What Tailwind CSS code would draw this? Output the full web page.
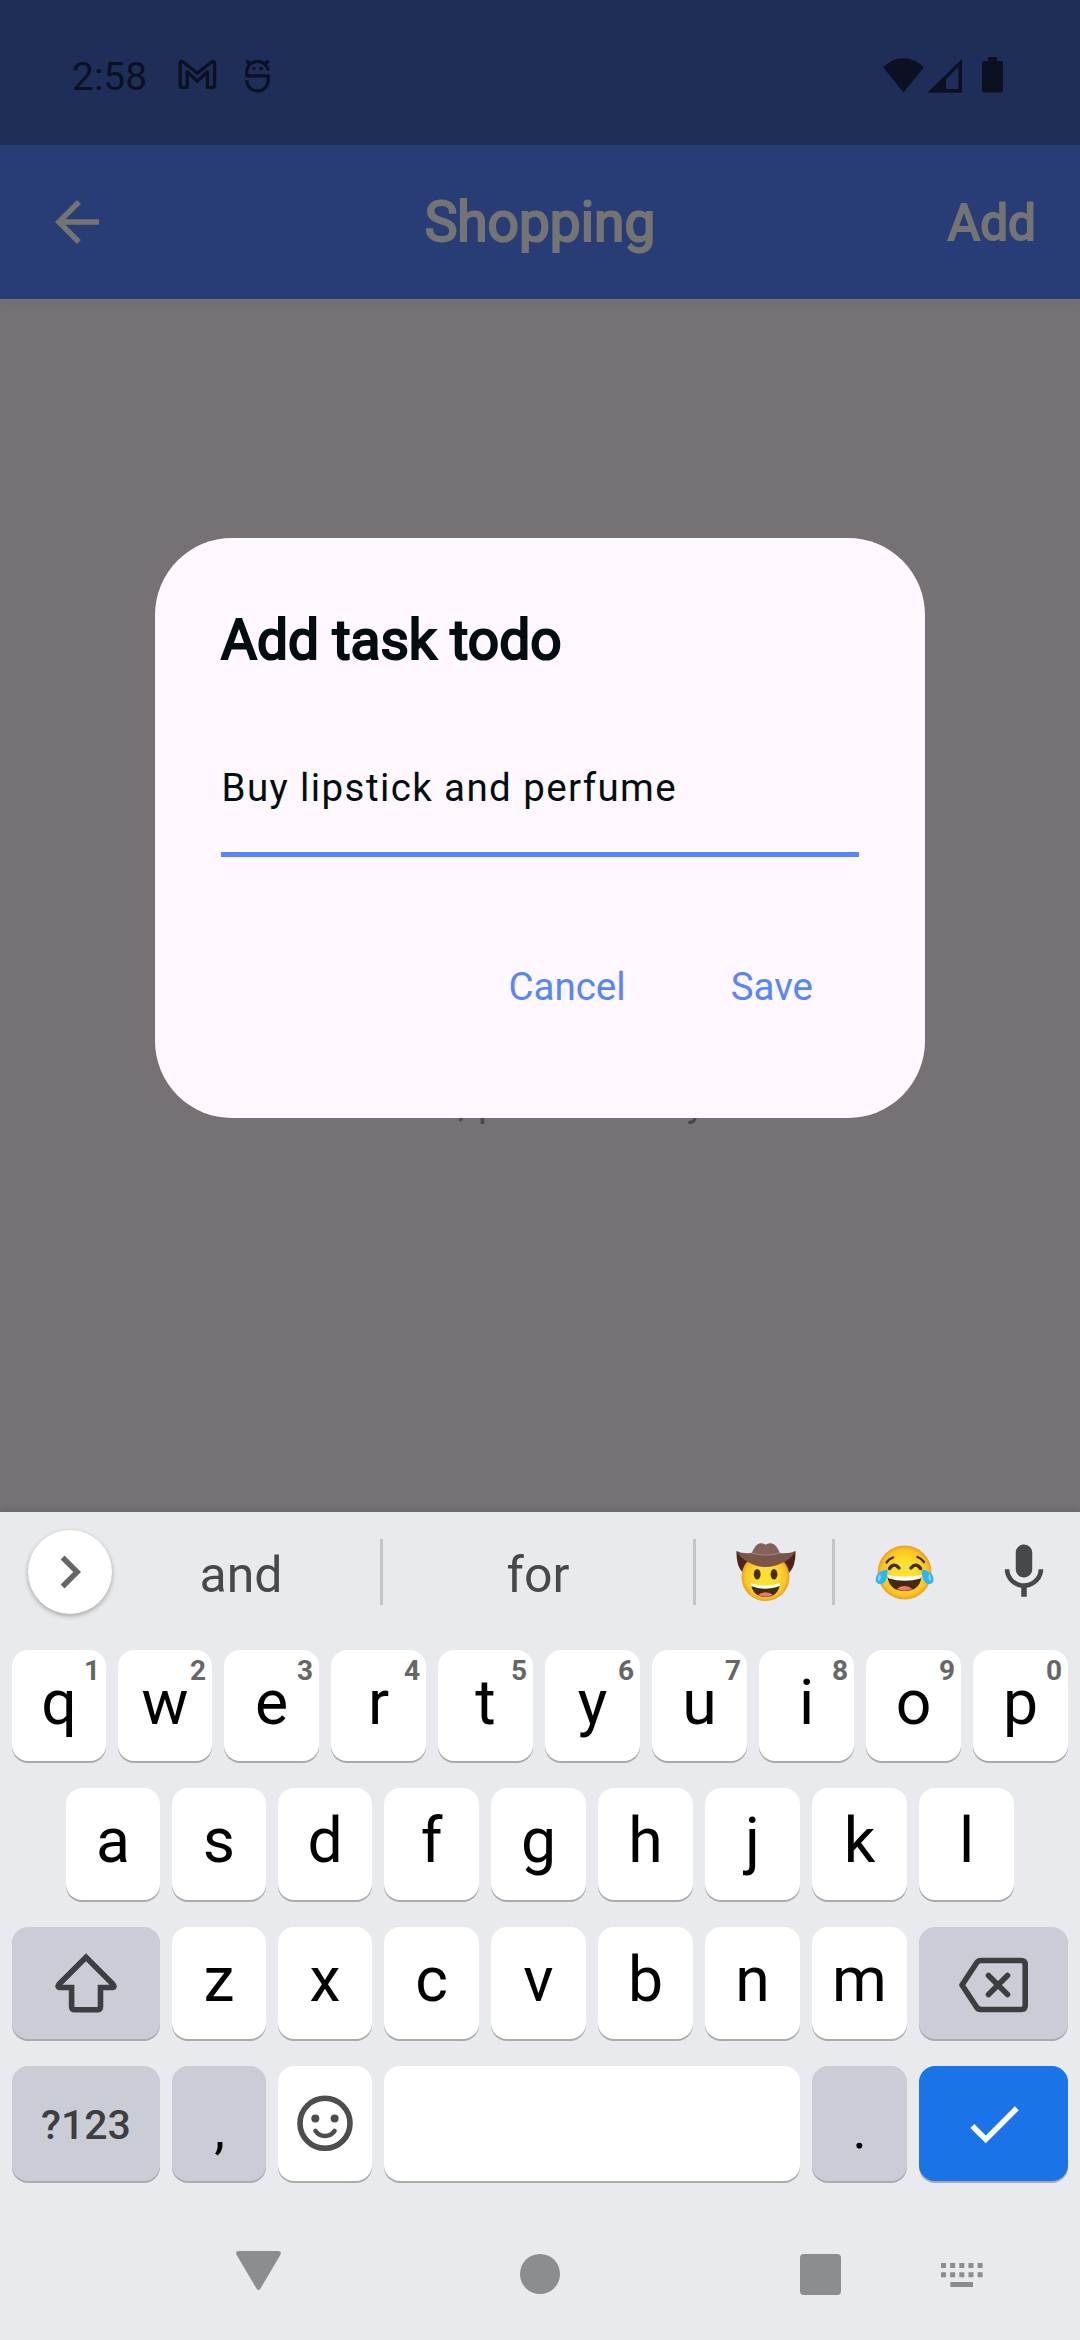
<!DOCTYPE html>
<html lang="en">
<head>
<meta charset="utf-8">
<title>Shopping</title>
<script src="https://cdn.jsdelivr.net/npm/@tailwindcss/browser@4"></script>
</head>
<body class="font-['Roboto',sans-serif]">
<div class="relative flex h-[2340px] w-[1080px] flex-col overflow-hidden bg-[#767175]">

  <!-- Status bar -->
  <header class="flex h-[145px] items-center justify-between bg-[#1f2e59] pt-[5px] pr-[76px] pl-[72px] text-[#0c1122]">
    <div class="flex items-center">
      <span class="w-[105px] pt-[4px] text-[39px] leading-none">2:58</span>
      <svg class="h-[36px] w-[40px]" viewBox="176 57 40 36" fill="none" stroke="currentColor" stroke-width="3.300" stroke-linejoin="round"><path d="M179.100 64.500Q179.100 59.500 183.100 62.700L196.300 73.200L209.600 62.700Q213.600 59.500 213.600 64.500V85.500Q213.600 87.300 211.700 87.300H206.400V71.800L196.300 81.300L186.200 71.800V87.300H181Q179.100 87.300 179.100 85.500Z"/></svg>
      <svg class="ml-[27px] h-[36px] w-[28px]" viewBox="244 57 28 36" fill="none" stroke="currentColor" stroke-width="3.300"><path d="M268.200 70.500A10.800 10.500 0 0 0 246.800 70.500V75.800H268.200V80A10.700 11 0 0 1 246.800 80"/><path d="M246.500 60.500l3.500 3.500M268.500 60.500l-3.500 3.500"/><circle cx="254" cy="68.500" r="1.700" fill="currentColor" stroke="none"/><circle cx="261" cy="68.500" r="1.700" fill="currentColor" stroke="none"/></svg>
    </div>
    <div class="flex items-center">
      <svg class="h-[36px] w-[122px]" viewBox="882 57 122 36" fill="currentColor"><path d="M903.5 92.5L883 67.3Q892 58.2 903.5 58.2T924 67.3Z"/><path fill-rule="evenodd" d="M927.4 92.7L962 58.7V92.7ZM946 79V89H958.4V67Z"/><path d="M988 57H997V61H1001Q1003 61 1003 63V90.5Q1003 92.5 1001 92.5H984Q982 92.5 982 90.5V63Q982 61 984 61H988Z"/></svg>
    </div>
  </header>

  <!-- App bar -->
  <nav class="grid h-[154px] grid-cols-3 items-center bg-[#283c75] pr-[44px] pl-[44px] text-[#747474] shadow-[0_2px_8px_rgba(0,0,0,0.06)]">
    <svg class="h-[66px] w-[66px]" viewBox="0 0 24 24" fill="currentColor"><path d="M20 11H7.83l5.59-5.59L12 4l-8 8 8 8 1.410-1.410L7.830 13H20z"/></svg>
    <h1 class="text-center text-[55px] leading-none [-webkit-text-stroke:2.200px]">Shopping</h1>
    <span class="pt-[3px] text-right text-[49.5px] leading-none [-webkit-text-stroke:2px]">Add</span>
  </nav>

  <!-- Page text behind the dialog -->
  <main class="flex-1 pt-[781px]">
    <p class="flex justify-between pr-[375px] pl-[458px] text-[38.5px] leading-[45px] text-[#4a474a]"><span class="tracking-[1.4px]">, p</span><span>y</span></p>
  </main>

  <!-- Dialog -->
  <section class="absolute top-[538.3px] left-[155px] flex h-[580px] w-[770px] flex-col rounded-[77px] bg-[#fef7ff] px-[66px] pt-[70px] text-[#020e11]">
    <h2 class="text-[55px] leading-[64px] [-webkit-text-stroke:2.200px]">Add task todo</h2>
    <div class="mt-[62px] flex h-[123px] items-center border-b-[5.5px] border-[#5686ff] pb-[10px] pl-[0.5px] text-[38.5px] leading-none tracking-[1.400px]">Buy lipstick and perfume</div>
    <div class="mt-[105px] flex justify-end gap-[105px] pr-[46px] text-[38.5px] leading-[50px] text-[#5686ff]"><span>Cancel</span><span>Save</span></div>
  </section>

  <!-- Keyboard -->
  <section class="flex h-[828px] flex-col bg-[#e8eaed] text-black shadow-[0_-2px_6px_rgba(0,0,0,0.1)]">
    <!-- Suggestions -->
    <div class="flex h-[120px] items-center text-[50px] leading-none text-[#47484a]">
      <div class="ml-[28px] flex size-[84px] items-center justify-center rounded-full bg-white shadow-[0_2px_5px_rgba(0,0,0,0.3)]">
        <svg class="size-[66px]" viewBox="0 0 24 24" fill="#666666"><path d="M10 6L8.59 7.41 13.17 12l-4.58 4.59L10 18l6-6z"/></svg>
      </div>
      <span class="w-[268px] pt-[5px] pr-[10px] text-center">and</span>
      <i class="h-[66px] w-[3px] bg-[#c4c5c9]"></i>
      <span class="w-[310px] pt-[5px] text-center">for</span>
      <i class="h-[66px] w-[3px] bg-[#c4c5c9]"></i>
      <div class="flex w-[136px] justify-center pl-[3px]">
        <svg class="size-[60px]" viewBox="0 0 60 60">
          <defs><radialGradient id="face"><stop offset="0.4" stop-color="#fde030"/><stop offset="0.85" stop-color="#f9c426"/><stop offset="1" stop-color="#ee9d1c"/></radialGradient></defs>
          <path fill="#4e2419" d="M.5 9Q0 24 7 31L14 20ZM59.500 9Q60 24 53 31L46 20Z"/>
          <circle cx="29.500" cy="35" r="24" fill="url(#face)"/>
          <path fill="#7a554a" d="M.5 9Q7 12 15 11H44Q53 12 59.500 9Q56 16 48 20Q39 25 29.500 25T12 20Q4 16 .5 9Z"/>
          <path fill="#84625a" d="M15.500 12Q19 2 24 1.300Q27.500 .8 29.500 2.800Q32 .8 35 1.300Q41 2 44 12Q30 16 15.500 12Z"/>
          <path fill="none" stroke="#9c8079" stroke-width="1" d="M15.500 11Q30 15 44 11"/>
          <ellipse cx="21.200" cy="32.300" rx="3.400" ry="5.300" fill="#4a2d0d"/><ellipse cx="38" cy="32.300" rx="3.400" ry="5.300" fill="#4a2d0d"/>
          <path fill="#422b0d" d="M15 42Q29.500 47 44 42Q42 55 29.500 55T15 42Z"/>
          <path fill="#fff" d="M15 41Q29.500 46.500 44 41V44Q29.500 49.500 15 44Z"/>
          <path fill="#ed7770" d="M22 53Q25 50.300 29.500 50.300T37 53Q29.500 56.500 22 53Z"/>
        </svg>
      </div>
      <i class="h-[66px] w-[3px] bg-[#c4c5c9]"></i>
      <div class="flex w-[139px] justify-center">
        <svg class="size-[60px]" viewBox="0 0 60 60">
          <circle cx="29.600" cy="30.500" r="27" fill="url(#face)"/>
          <path fill="none" stroke="#422b0d" stroke-width="2.300" stroke-linecap="round" d="M11.500 20.500Q14 17 18 15.500M42.500 15Q46.500 16.500 49 20"/>
          <path fill="none" stroke="#422b0d" stroke-width="3.400" stroke-linecap="round" d="M14.500 26.500Q19 20 24 26M36 26Q41 20 45.500 26.500"/>
          <path fill="#422b0d" d="M12.500 34.500Q29.600 38 46.500 34.500Q45 49 29.600 49T12.500 34.500Z"/>
          <path fill="#fff" d="M12 33Q29.600 36.500 47 33Q47 35.500 45.500 36.500Q29.600 41 14 36.500Q12.500 35.500 12 33Z"/>
          <path fill="#ed7770" d="M22 47Q25 44 29.600 44T37.500 47Q29.600 50.500 22 47Z"/>
          <path fill="#29b6f6" d="M12.500 27.500Q12.500 42 5.500 42Q0 42 .8 36Q2 29 12.500 27.500ZM46.700 27.500Q57 29 58.500 36Q59 42 54 42Q47 42 46.700 27.500Z"/>
          <path fill="#81d4fa" d="M5 32Q2 35 3 38.500Q6 40 5.800 34ZM54.200 32Q57 35 56 38.500Q53.500 40 53.400 34Z"/>
        </svg>
      </div>
      <svg class="ml-[17px] size-[66px]" viewBox="0 0 24 24" fill="#47484a"><path d="M12 14c1.660 0 2.990-1.340 2.990-3L15 5c0-1.660-1.340-3-3-3S9 3.340 9 5v6c0 1.660 1.340 3 3 3zm5.300-3c0 3-2.540 5.100-5.300 5.100S6.700 14 6.700 11H5c0 3.410 2.720 6.230 6 6.720V21h2v-3.280c3.280-.48 6-3.300 6-6.720h-1.700z"/></svg>
    </div>

    <!-- Letter rows -->
    <div id="row1" class="mt-[18px] grid h-[111px] grid-cols-[94px_94px_repeat(8,95px)] gap-[12px] px-[12px]"></div>
    <div id="row2" class="mt-[27px] grid h-[112px] grid-cols-[repeat(3,94px)_repeat(6,95px)] gap-[12px] px-[66px]"></div>
    <div class="mt-[27px] flex h-[112px] gap-[12px] px-[12px]">
      <div class="flex w-[148px] items-center justify-center rounded-[16px] bg-[#cbcdd6] shadow-[0_2px_0_#a9aaad]">
        <svg class="h-[64px] w-[66px]" viewBox="52.7 1950 66 64" fill="none" stroke="#3d3e40" stroke-width="5.600"><path d="M85.700 1956.300L59 1983Q56 1986.500 60.500 1986.500H71.300V2005.500Q71.300 2008.700 74.500 2008.700H97Q100.200 2008.700 100.200 2005.500V1986.500H111Q115.500 1986.500 112.400 1983Z"/></svg>
      </div>
      <div id="row3" class="grid grid-cols-[94px_94px_repeat(5,95px)] gap-[12px]"></div>
      <div class="flex w-[149px] items-center justify-center rounded-[16px] bg-[#cbcdd6] shadow-[0_2px_0_#a9aaad]">
        <svg class="h-[60px] w-[72px]" viewBox="957 1953.500 72 60" fill="none" stroke="#3d3e40" stroke-width="5.600"><path stroke-linejoin="round" d="M961 1985.500L975.500 1963.500Q977 1961 980 1961H1020Q1024.200 1961 1024.200 1965V2006Q1024.200 2010 1020 2010H980Q977 2010 975.500 2007.500Z"/><path stroke-linecap="round" d="M987.500 1976L1006.500 1995M1006.500 1976L987.500 1995"/></svg>
      </div>
    </div>
    <div class="mt-[27px] flex h-[115px] gap-[12px] px-[12px] *:rounded-[16px] *:shadow-[0_2px_0_#a9aaad]">
      <div class="flex w-[148px] items-center justify-center bg-[#cbcdd6] pt-[3px] text-[41px] leading-none font-medium text-[#3d3e40]">?123</div>
      <div class="flex w-[94px] items-end justify-center bg-[#cbcdd6] pb-[19px] pl-[1px] text-[54px] leading-[64px]">,</div>
      <div class="flex w-[94px] items-center justify-center bg-white">
        <svg class="size-[60px]" viewBox="0 0 60 60" fill="none" stroke="#4c4d4d" stroke-width="5.600"><circle cx="30" cy="29.300" r="25"/><circle cx="20.300" cy="24.500" r="4" fill="#4c4d4d" stroke="none"/><circle cx="39.600" cy="24.500" r="4" fill="#4c4d4d" stroke="none"/><path stroke-width="4.600" stroke-linecap="round" d="M20.500 37Q24 42 30 42T39.500 37"/></svg>
      </div>
      <div class="w-[416px] bg-white"></div>
      <div class="flex w-[95px] items-end justify-center bg-[#cbcdd6] pb-[19px] text-[54px] leading-[64px]">.</div>
      <div class="flex w-[149px] items-center justify-center bg-[#1b73e8]">
        <svg class="size-[66px]" viewBox="0 0 24 24" fill="#ffffff"><path d="M9 16.170L4.830 12l-1.420 1.410L9 19 21 7l-1.410-1.410z"/></svg>
      </div>
    </div>

    <!-- System navigation -->
    <div class="flex flex-1 pl-[236px]">
      <svg class="mt-[70px] h-[39px] w-[45px]" viewBox="0 0 45 39" fill="#8c8d8f"><path d="M3 0H42Q46 0 44.300 4L24.500 37.500Q22.500 40.500 20.500 37.500L.7 4Q-1 0 3 0Z"/></svg>
      <i class="mt-[73px] ml-[239px] size-[40px] rounded-full bg-[#8c8d8f]"></i>
      <i class="mt-[73px] ml-[240px] size-[41px] rounded-[4px] bg-[#8c8d8f]"></i>
      <svg class="mt-[82px] ml-[100px] h-[24px] w-[43px]" viewBox="0 0 43 24" fill="none" stroke="#8c8d8f" stroke-width="5"><path stroke-dasharray="5 4.150" d="M0 2.500H42M0 11.700H42"/><path d="M9.300 21.500H32"/></svg>
    </div>
  </section>
</div>
<script>
  const digits = "1234567890";
  function fill(id, letters, numbered) {
    document.getElementById(id).innerHTML = [...letters].map((c, i) =>
      `<div class="relative flex items-center justify-center rounded-[16px] bg-white pb-[5px] text-[62.5px] leading-none shadow-[0_2px_0_#a9aaad]">${c}${numbered ? `<span class="absolute top-[7px] right-[6px] text-[28px] leading-[28px] font-bold text-[#666666]">${digits[i]}</span>` : ""}</div>`
    ).join("");
  }
  fill("row1", "qwertyuiop", true);
  fill("row2", "asdfghjkl", false);
  fill("row3", "zxcvbnm", false);
</script>
</body>
</html>
